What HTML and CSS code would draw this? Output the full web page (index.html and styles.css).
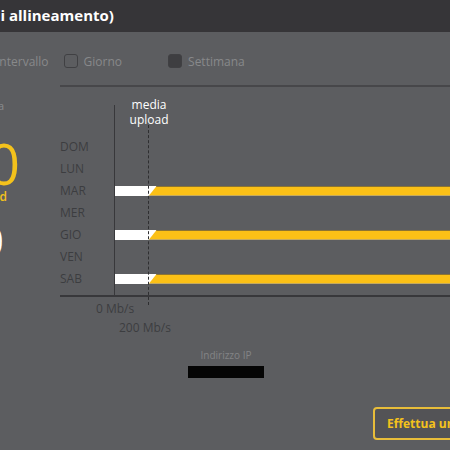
FILE: index.html
```html
<!DOCTYPE html>
<html>

<head lang="it">
    <meta charset="UTF-8">
    <title>Velocità</title>
    <link rel="stylesheet" href="styles.css">
</head>

<body>
    <header class="topbar">
        <h1 class="title">di allineamento)</h1>
    </header>

    <div class="filters">
        <span class="filter_label">Intervallo</span>
        <label class="check"><span class="box"></span>Giorno</label>
        <label class="check check_week"><span class="box box_on"></span>Settimana</label>
    </div>

    <div class="content">
        <div class="stats">
            <div class="stat_label">media</div>
            <div class="stat_num stat_up">200</div>
            <div class="stat_unit">Upload</div>
            <div class="stat_num stat_down">200</div>
        </div>

        <div class="chart">
            <div class="plot_wrap">
                <ul class="days">
                    <li>DOM</li>
                    <li>LUN</li>
                    <li>MAR</li>
                    <li>MER</li>
                    <li>GIO</li>
                    <li>VEN</li>
                    <li>SAB</li>
                </ul>
                <div class="plot">
                    <div class="row"></div>
                    <div class="row"></div>
                    <div class="row"><div class="bar"><div class="bar_up"></div></div></div>
                    <div class="row"></div>
                    <div class="row"><div class="bar"><div class="bar_up"></div></div></div>
                    <div class="row"></div>
                    <div class="row"><div class="bar"><div class="bar_up"></div></div></div>
                    <div class="marker">
                        <span class="marker_text">media<br>upload</span>
                    </div>
                </div>
            </div>
            <div class="tick tick_zero">0 Mb/s</div>
            <div class="tick tick_mid">200 Mb/s</div>

            <div class="ip">
                <div class="ip_label">Indirizzo IP</div>
                <div class="ip_value"></div>
            </div>

            <button class="btn">Effettua una misura</button>
        </div>
    </div>
</body>

</html>
```

FILE: styles.css
```css
* {
    margin: 0;
    padding: 0;
    box-sizing: border-box;
}

li {
    list-style: none;
}

html,
body {
    width: 450px;
    height: 450px;
    overflow: hidden;
}

body {
    background-color: #5c5d60;
    font-family: "Open Sans", "Liberation Sans", sans-serif;
    color: #3c3d40;
}

/* barra titolo */
.topbar {
    height: 32px;
    background-color: #363538;
    overflow: hidden;
}

.title {
    margin-left: -9px;
    font-size: 15px;
    font-weight: 700;
    line-height: 30px;
    color: #ffffff;
    white-space: nowrap;
}

/* filtri */
.filters {
    height: 53px;
    display: flex;
    align-items: center;
    padding-top: 5px;
    font-size: 12px;
    color: #88898b;
    overflow: hidden;
}

.filter_label {
    margin-left: -4px;
    margin-right: 15px;
}

.check {
    display: flex;
    align-items: center;
    gap: 6px;
}

.check_week {
    margin-left: 46px;
}

.box {
    width: 14px;
    height: 14px;
    border: 1.5px solid #404043;
    border-radius: 3px;
}

.box_on {
    background-color: #3e3e41;
}

/* contenuto */
.content {
    display: flex;
}

.stats {
    flex: none;
    width: 60px;
    overflow: hidden;
    white-space: nowrap;
    display: flex;
    flex-direction: column;
    align-items: flex-end;
}

.stat_label {
    margin-top: 13px;
    margin-right: 56px;
    font-size: 11px;
    color: #8a8b8d;
}

.stat_num {
    line-height: 1;
}

.stat_up {
    margin-top: 22px;
    margin-right: 40px;
    font-size: 56px;
    font-weight: 400;
    color: #f4c21c;
}

.stat_unit {
    margin-top: -3px;
    margin-right: 53px;
    font-size: 12px;
    font-weight: 600;
    color: #f4c21c;
}

.stat_down {
    margin-top: 16px;
    margin-right: 56px;
    font-size: 40px;
    font-weight: 300;
    color: #ffffff;
}

.chart {
    flex: 1;
    min-width: 0;
    border-top: 2px solid #47474a;
}

.plot_wrap {
    margin-top: 18px;
    display: flex;
    border-bottom: 2px solid #38383b;
}

.days {
    width: 54px;
    padding-top: 31px;
    font-size: 12px;
}

.days li {
    height: 22px;
    line-height: 22px;
}

.plot {
    flex: 1;
    position: relative;
    padding-top: 31px;
    padding-bottom: 5px;
    border-left: 1px solid #38383b;
}

.row {
    height: 22px;
    display: flex;
    align-items: center;
}

.bar {
    width: 100%;
    height: 10px;
    background-color: #ffffff;
    margin-top: -1px;
}

.bar_up {
    height: 100%;
    margin-left: 34px;
    background-color: #fbc016;
    border-top: 1px solid #8c7432;
    border-bottom: 1px solid #8c7432;
    clip-path: polygon(8px 0, 100% 0, 100% 100%, 0 100%);
}

/* linea della media */
.marker {
    position: absolute;
    left: 33px;
    top: 20px;
    height: 180px;
    border-left: 1px dashed #2e2e30;
}

.marker_text {
    position: absolute;
    top: -28px;
    left: 0;
    transform: translateX(-50%);
    text-align: center;
    font-size: 12px;
    line-height: 15px;
    color: #ffffff;
}

.tick {
    font-size: 12px;
    white-space: nowrap;
}

.tick_zero {
    margin-top: 3px;
    margin-left: 36px;
}

.tick_mid {
    margin-top: 2px;
    margin-left: 59px;
}

.ip {
    width: 76px;
    margin-top: 12px;
    margin-left: 128px;
    text-align: center;
}

.ip_label {
    font-size: 10px;
    color: #838486;
    white-space: nowrap;
}

.ip_value {
    height: 12px;
    margin-top: 4px;
    background-color: #050505;
}

.btn {
    display: block;
    margin-top: 29px;
    margin-left: 313px;
    padding: 0 12px;
    height: 33px;
    border: 2px solid #e8bd3a;
    border-radius: 4px;
    background-color: #535356;
    color: #f4c21c;
    font-family: "Open Sans", "Liberation Sans", sans-serif;
    font-size: 12px;
    font-weight: 700;
    white-space: nowrap;
}
```
